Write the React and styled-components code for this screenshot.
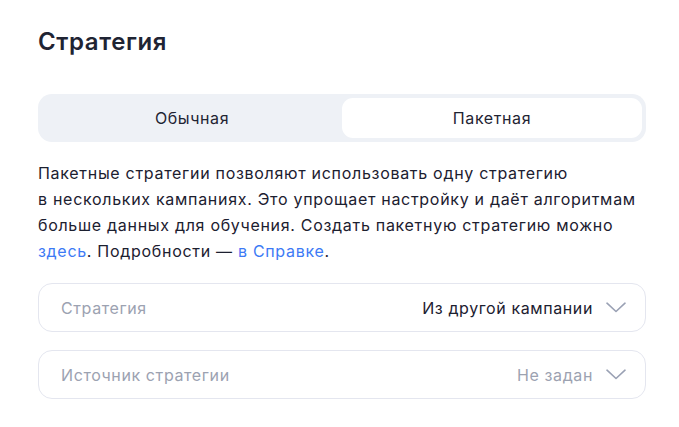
import React, { useState } from "react";
import styled, { createGlobalStyle } from "styled-components";

const GlobalStyle = createGlobalStyle`
  html, body {
    margin: 0;
    padding: 0;
    background: #fff;
  }
  body {
    font-family: Inter, "Noto Sans", "Liberation Sans", sans-serif;
    -webkit-font-smoothing: antialiased;
  }
`;

const S = {
  Wrap: styled.div`
    width: 608px;
    padding: 26px 0 0 38px;
    display: flex;
    flex-direction: column;
  `,
  Title: styled.h2`
    margin: 0;
    font-size: 24px;
    line-height: 32px;
    font-weight: 600;
    color: #1f2433;
    letter-spacing: 0.6px;
  `,
  Tabs: styled.div`
    margin-top: 36px;
    display: grid;
    grid-template-columns: 1fr 1fr;
    padding: 4px;
    border-radius: 14px;
    background-color: #eef1f6;
  `,
  Tab: styled.button`
    height: 40px;
    border: none;
    border-radius: 11px;
    font-family: inherit;
    font-size: 16px;
    letter-spacing: 0.6px;
    color: #1f2433;
    cursor: pointer;
    background-color: ${({ $active }) => ($active ? "#fff" : "transparent")};
  `,
  Text: styled.p`
    margin: 18px 0 0;
    font-size: 16px;
    line-height: 26px;
    letter-spacing: 0.7px;
    color: #1c2030;
    white-space: nowrap;

    a {
      color: #3d7af5;
      text-decoration: none;
    }
  `,
  Fields: styled.div`
    margin-top: 19px;
    display: flex;
    flex-direction: column;
    gap: 18px;
  `,
  Field: styled.div`
    height: 47px;
    display: flex;
    align-items: center;
    justify-content: space-between;
    padding: 0 19px 0 22px;
    border: 1px solid #e4e6ef;
    border-radius: 14px;
    font-size: 16px;
    letter-spacing: 0.6px;
    cursor: pointer;

    .label {
      color: #9ca2b1;
    }
    .value {
      display: flex;
      align-items: center;
      gap: 13px;
      color: ${({ $empty }) => ($empty ? "#9ca2b1" : "#1c2030")};
    }
  `,
};

function Chevron() {
  return (
    <svg width="20" height="11" viewBox="0 0 20 11" fill="none">
      <path
        d="M1 1.2l9 8.3 9-8.3"
        stroke="#9aa1b4"
        strokeWidth="1.6"
        strokeLinecap="round"
        strokeLinejoin="round"
      />
    </svg>
  );
}

const fields = [
  { label: "Стратегия", value: "Из другой кампании", empty: false },
  { label: "Источник стратегии", value: "Не задан", empty: true },
];

export default function App() {
  const [tab, setTab] = useState(1);

  return (
    <>
      <GlobalStyle />
      <S.Wrap>
        <S.Title>Стратегия</S.Title>
        <S.Tabs>
          {["Обычная", "Пакетная"].map((name, index) => (
            <S.Tab key={name} $active={tab === index} onClick={() => setTab(index)}>
              {name}
            </S.Tab>
          ))}
        </S.Tabs>
        <S.Text>
          Пакетные стратегии позволяют использовать одну стратегию
          <br />
          в нескольких кампаниях. Это упрощает настройку и даёт алгоритмам
          <br />
          больше данных для обучения. Создать пакетную стратегию можно
          <br />
          <a href="#">здесь</a>. Подробности — <a href="#">в Справке</a>.
        </S.Text>
        <S.Fields>
          {fields.map((field) => (
            <S.Field key={field.label} $empty={field.empty}>
              <span className="label">{field.label}</span>
              <span className="value">
                {field.value}
                <Chevron />
              </span>
            </S.Field>
          ))}
        </S.Fields>
      </S.Wrap>
    </>
  );
}
